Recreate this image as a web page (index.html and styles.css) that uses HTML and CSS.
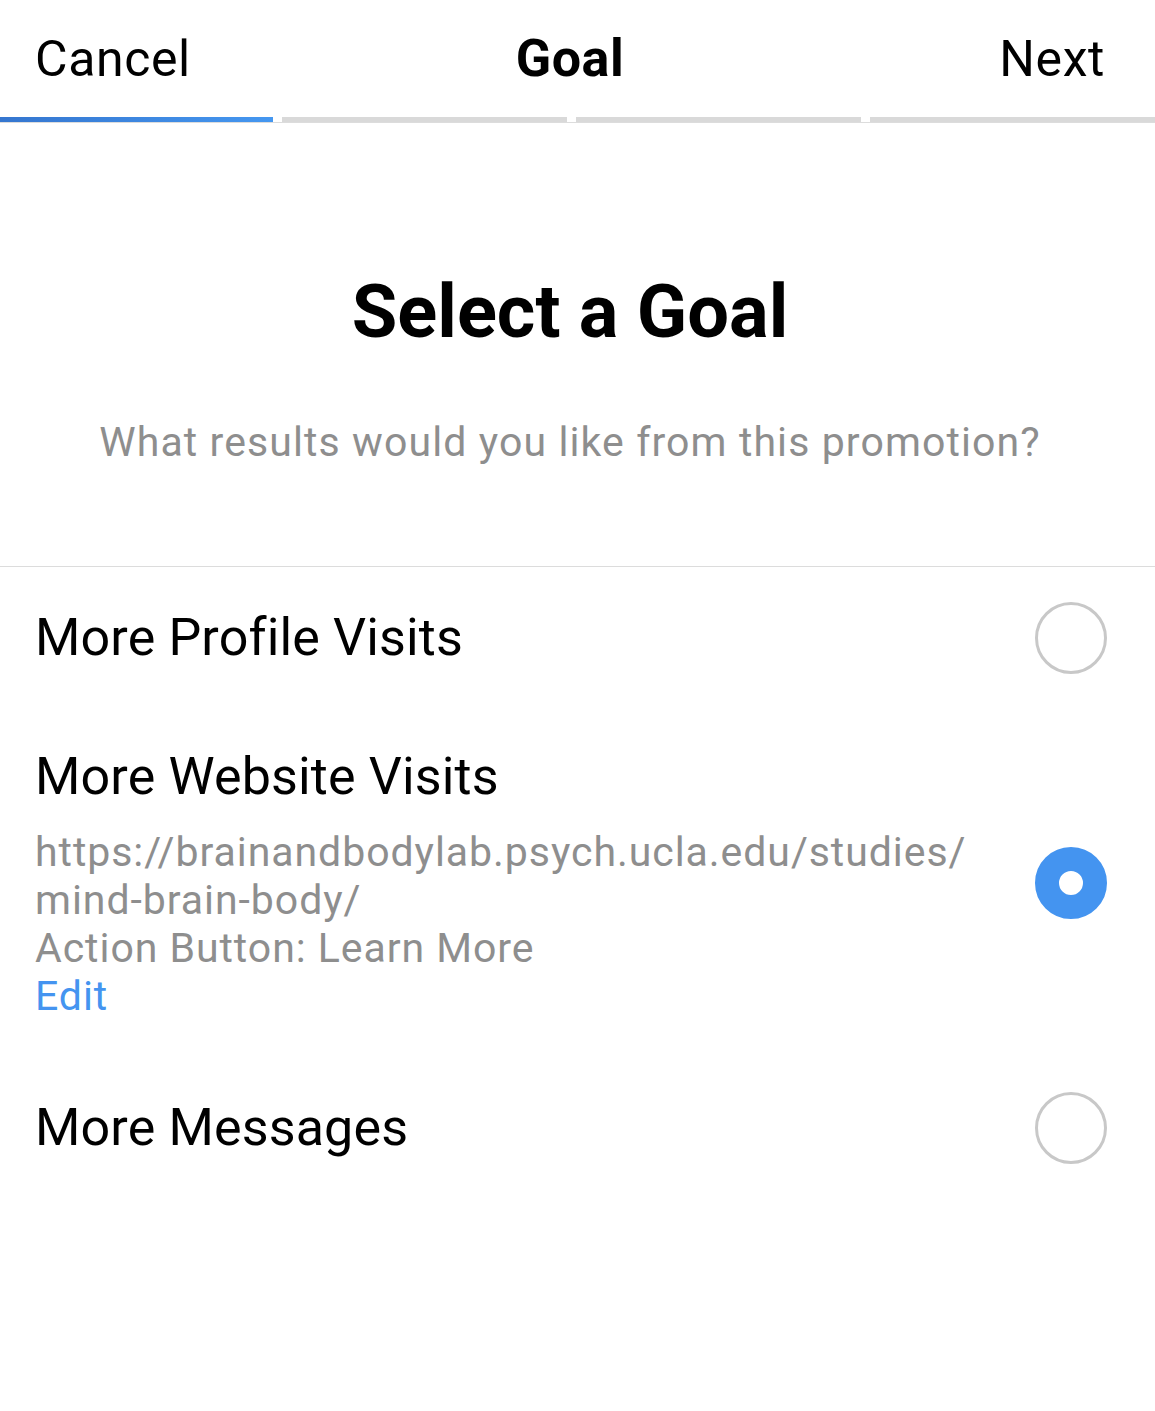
FILE: index.html
```html
<!DOCTYPE html>
<html lang="en">
<head>
<meta charset="utf-8">
<title>Select a Goal</title>
<link rel="stylesheet" href="styles.css">
</head>
<body>
<header class="nav">
  <span class="nav-btn">Cancel</span>
  <span class="nav-title">Goal</span>
  <span class="nav-btn">Next</span>
</header>
<div class="progress">
  <div class="seg seg-active"></div>
  <div class="seg"></div>
  <div class="seg"></div>
  <div class="seg"></div>
</div>
<section class="intro">
  <h1 class="title">Select a Goal</h1>
  <p class="subtitle">What results would you like from this promotion?</p>
</section>
<ul class="options">
  <li class="option">
    <div class="option-text">
      <div class="option-title">More Profile Visits</div>
    </div>
    <span class="radio"></span>
  </li>
  <li class="option">
    <div class="option-text">
      <div class="option-title">More Website Visits</div>
      <div class="option-details">
        <div class="detail">https://brainandbodylab.psych.ucla.edu/studies/<br>mind-brain-body/</div>
        <div class="detail">Action Button: Learn More</div>
        <div class="edit">Edit</div>
      </div>
    </div>
    <span class="radio radio-on"></span>
  </li>
  <li class="option">
    <div class="option-text">
      <div class="option-title">More Messages</div>
    </div>
    <span class="radio"></span>
  </li>
</ul>
</body>
</html>
```

FILE: styles.css
```css
* { box-sizing: border-box; }
html, body { margin: 0; padding: 0; background: #fff; }
body {
  font-family: Roboto, "Liberation Sans", Arial, sans-serif;
  color: #000;
  width: 1155px;
}

.nav {
  height: 117px;
  display: flex;
  align-items: center;
  justify-content: space-between;
  padding: 0 50px 0 35px;
  position: relative;
}
.nav-btn { font-size: 50px; line-height: 58px; letter-spacing: 0.6px; }
.nav-title {
  font-size: 52px;
  line-height: 58px;
  font-weight: 700;
  letter-spacing: 0.5px;
  position: absolute;
  left: 0; right: 15px;
  text-align: center;
  pointer-events: none;
}

.progress {
  display: flex;
  gap: 9px;
  height: 6px;
  border-bottom: 1px solid #dcdcdc;
}
.seg { flex: 1; height: 5px; background: #d9d9d9; }
.seg-active { flex: 0 0 273px; background: linear-gradient(to right, #3576cf, #4597f0); }

.intro {
  text-align: center;
  padding: 145px 15px 100px 0;
  border-bottom: 1px solid #dcdcdc;
}
.title {
  margin: 0;
  font-size: 74px;
  line-height: 88px;
  font-weight: 700;
}
.subtitle {
  margin: 62px 0 0;
  font-size: 41px;
  line-height: 48px;
  letter-spacing: 1.1px;
  color: #8e8e8e;
}

.options { list-style: none; margin: 0; padding: 0; }
.option {
  display: flex;
  align-items: center;
  justify-content: space-between;
  padding: 35px 48px 37px 35px;
}
.option-title { font-size: 52px; line-height: 62px; letter-spacing: 0.15px; }
.option-details {
  margin-top: 20px;
  font-size: 41px;
  line-height: 48px;
  letter-spacing: 0.95px;
  color: #8e8e8e;
}
.edit { color: #4494f0; }

.radio {
  flex: none;
  width: 72px;
  height: 72px;
  border-radius: 50%;
  border: 3px solid #c8c8c8;
}
.radio-on {
  border: 24px solid #4494f0;
  background: #fff;
}
```
